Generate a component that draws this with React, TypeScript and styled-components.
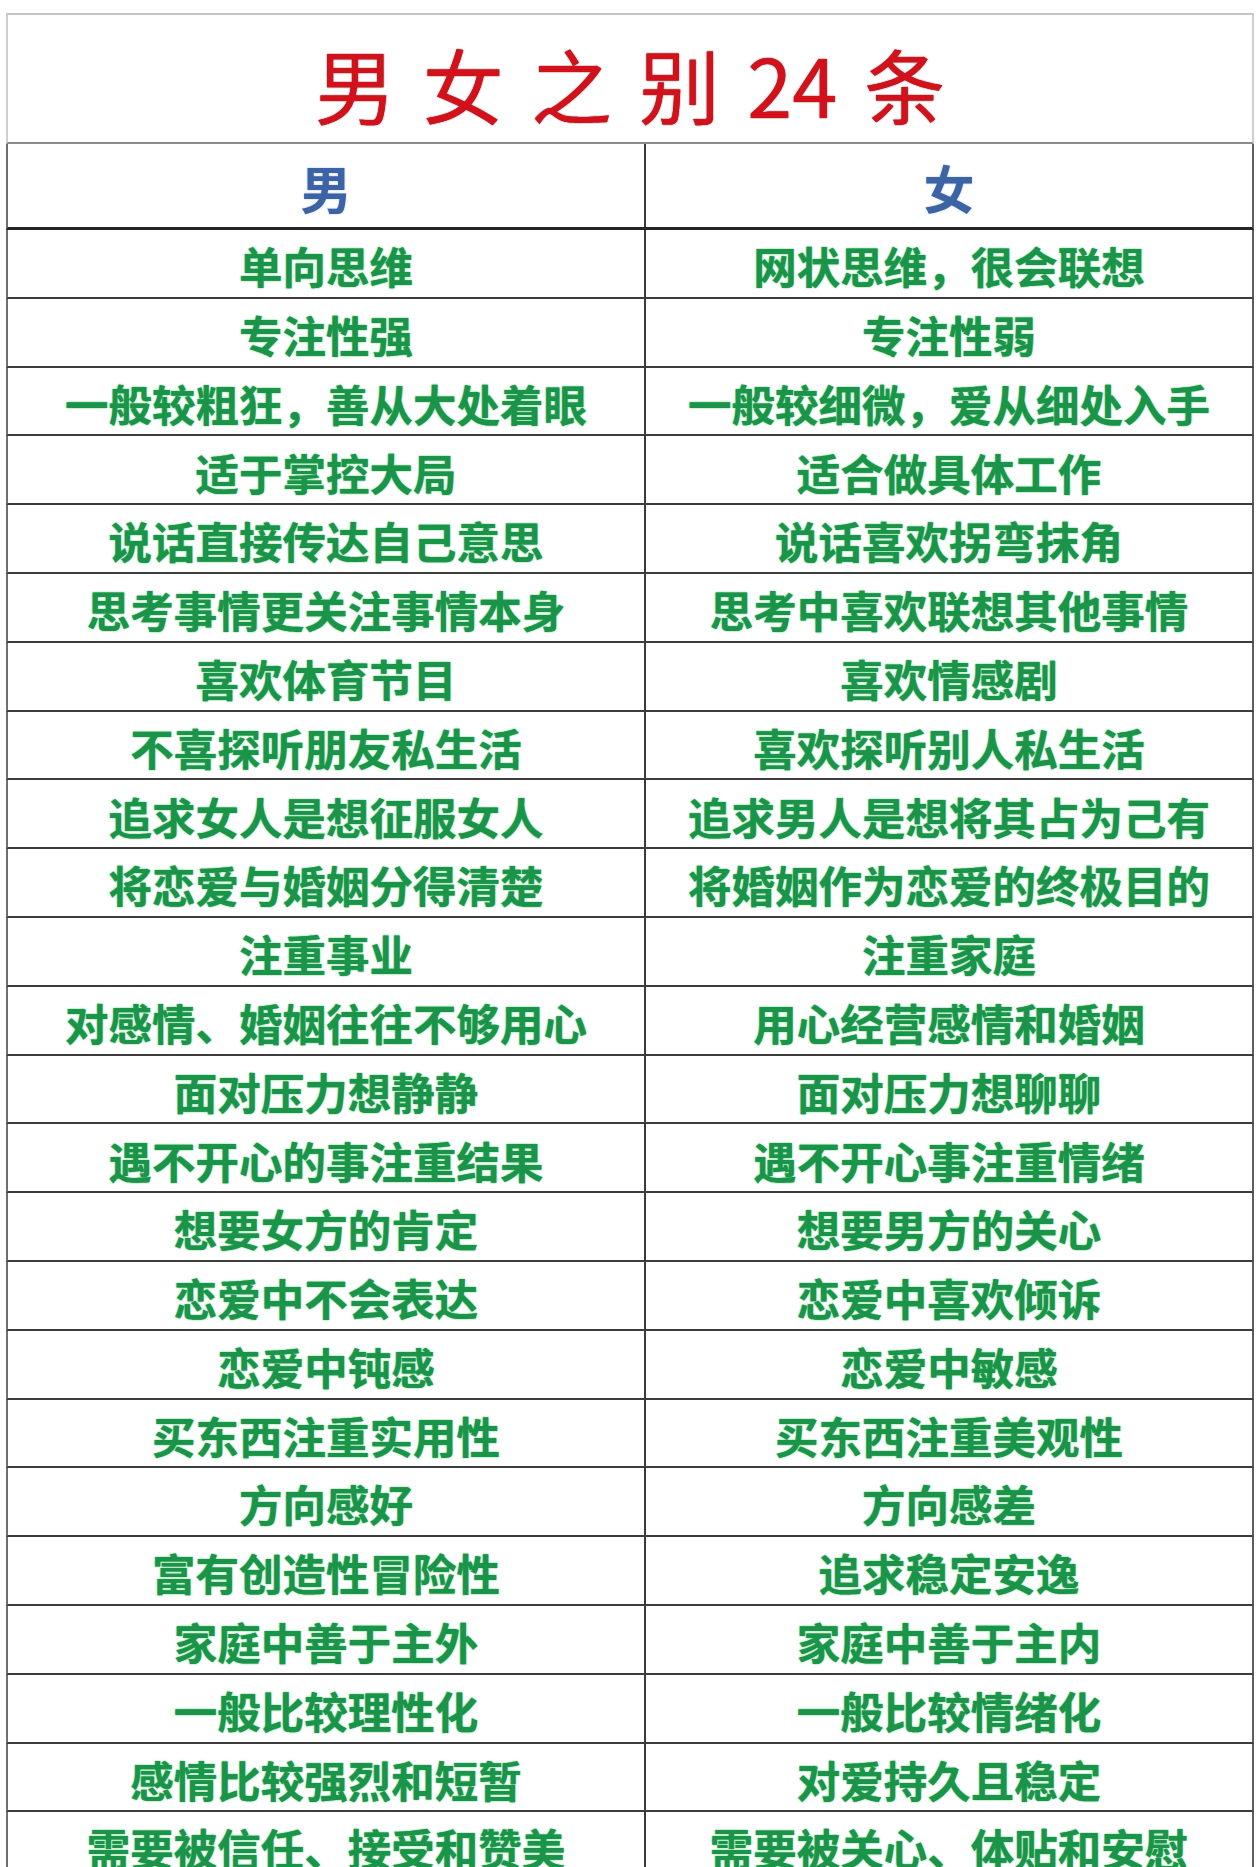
import React from "react";
import styled, { createGlobalStyle } from "styled-components";

const GlobalStyle = createGlobalStyle`
  html, body {
    margin: 0;
    padding: 0;
    background: #ffffff;
  }
  body {
    font-family: "Noto Sans CJK SC", "Noto Sans", sans-serif;
  }
`;

const Page = styled.div`
  width: 1257px;
  padding-top: 13px;
  padding-left: 6px;
  box-sizing: border-box;
  background: #ffffff;
`;

const Sheet = styled.div`
  width: 1248px;
  display: flex;
  flex-direction: column;
`;

const TitleRow = styled.div`
  box-sizing: border-box;
  height: 131px;
  border-top: 2px solid #c4c4c4;
  border-left: 2px solid #cfcfcf;
  border-right: 2px solid #cfcfcf;
  border-bottom: 2px solid #8c8c8c;
  display: flex;
  align-items: center;
  justify-content: center;
  padding-top: 8px;
`;

const Title = styled.h1`
  margin: 0;
  font-family: "Noto Sans CJK SC", sans-serif;
  font-weight: 400;
  font-size: 81px;
  line-height: 1;
  word-spacing: 9px;
  color: #d3111b;
  text-shadow: 0 0 1px #6b0b10, 0 0 2px rgba(120, 10, 20, 0.45);
  white-space: pre;
`;

const Row = styled.div<{ $height: number; $line: string; $lineWidth: number }>`
  box-sizing: border-box;
  height: ${(p) => p.$height}px;
  display: grid;
  grid-template-columns: 638px 1fr;
  border-left: 2px solid #6e6e6e;
  border-right: 2px solid #5e5e5e;
  border-bottom: ${(p) => p.$lineWidth}px solid ${(p) => p.$line};
`;

const Cell = styled.div<{ $tone: "head" | "body" }>`
  display: flex;
  align-items: center;
  justify-content: center;
  padding-top: ${(p) => (p.$tone === "head" ? "4px" : "5px")};
  white-space: nowrap;
  font-family: "Noto Sans CJK SC", sans-serif;
  font-weight: 700;
  line-height: 1;
  font-size: ${(p) => (p.$tone === "head" ? "51px" : "43.5px")};
  color: ${(p) => (p.$tone === "head" ? "#3b63a6" : "#1a9449")};
  text-shadow: ${(p) =>
    p.$tone === "head"
      ? "0 0 2px rgba(90, 130, 200, 0.5)"
      : "0 0 2px rgba(70, 210, 110, 0.75), 0 0 1px rgba(20, 110, 55, 0.6)"};
  &:first-child {
    border-right: 2px solid #3a3a3a;
  }
`;

const rows: [string, string][] = [
  ["单向思维", "网状思维，很会联想"],
  ["专注性强", "专注性弱"],
  ["一般较粗狂，善从大处着眼", "一般较细微，爱从细处入手"],
  ["适于掌控大局", "适合做具体工作"],
  ["说话直接传达自己意思", "说话喜欢拐弯抹角"],
  ["思考事情更关注事情本身", "思考中喜欢联想其他事情"],
  ["喜欢体育节目", "喜欢情感剧"],
  ["不喜探听朋友私生活", "喜欢探听别人私生活"],
  ["追求女人是想征服女人", "追求男人是想将其占为己有"],
  ["将恋爱与婚姻分得清楚", "将婚姻作为恋爱的终极目的"],
  ["注重事业", "注重家庭"],
  ["对感情、婚姻往往不够用心", "用心经营感情和婚姻"],
  ["面对压力想静静", "面对压力想聊聊"],
  ["遇不开心的事注重结果", "遇不开心事注重情绪"],
  ["想要女方的肯定", "想要男方的关心"],
  ["恋爱中不会表达", "恋爱中喜欢倾诉"],
  ["恋爱中钝感", "恋爱中敏感"],
  ["买东西注重实用性", "买东西注重美观性"],
  ["方向感好", "方向感差"],
  ["富有创造性冒险性", "追求稳定安逸"],
  ["家庭中善于主外", "家庭中善于主内"],
  ["一般比较理性化", "一般比较情绪化"],
  ["感情比较强烈和短暂", "对爱持久且稳定"],
  ["需要被信任、接受和赞美", "需要被关心、体贴和安慰"],
];

export default function App() {
  return (
    <>
      <GlobalStyle />
      <Page>
        <Sheet>
          <TitleRow>
            <Title>男 女 之 别 24 条</Title>
          </TitleRow>
          <Row $height={86} $line="#262626" $lineWidth={3}>
            <Cell $tone="head">男</Cell>
            <Cell $tone="head">女</Cell>
          </Row>
          {rows.map(([m, f], i) => (
            <Row key={i} $height={68.8} $line="#3c3c3c" $lineWidth={2}>
              <Cell $tone="body">{m}</Cell>
              <Cell $tone="body">{f}</Cell>
            </Row>
          ))}
        </Sheet>
      </Page>
    </>
  );
}
